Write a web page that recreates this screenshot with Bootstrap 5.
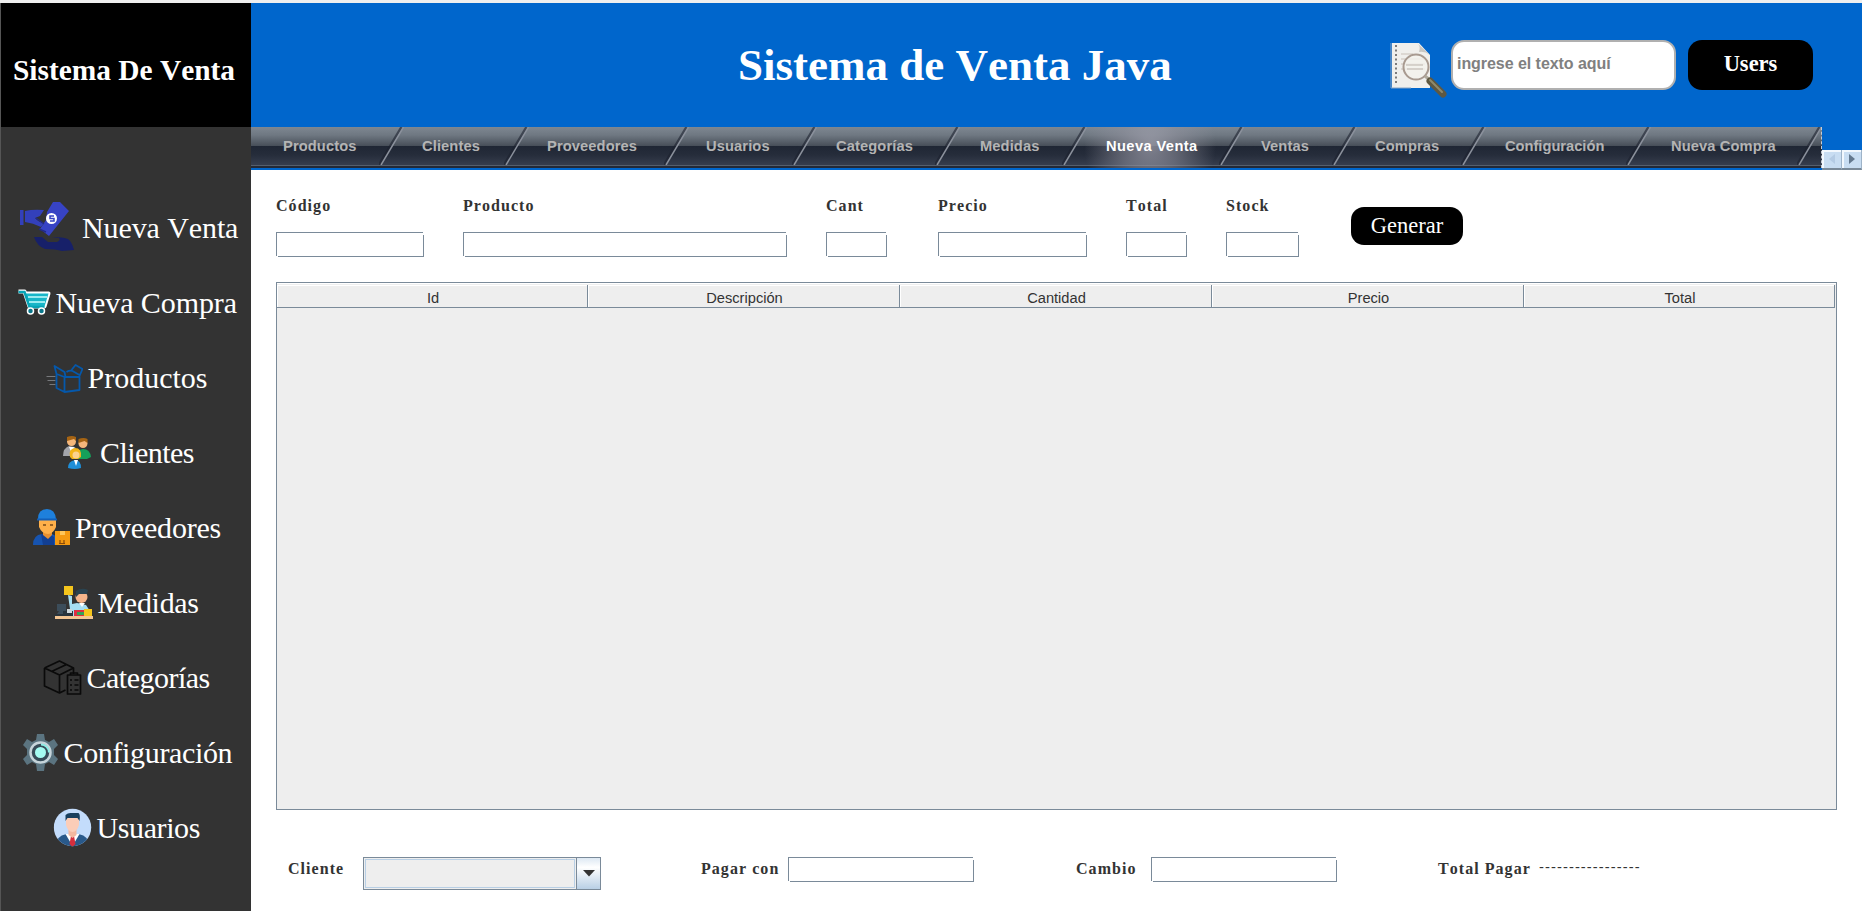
<!DOCTYPE html>
<html lang="es">
<head>
<meta charset="utf-8">
<meta name="viewport" content="width=device-width, initial-scale=1">
<title>Sistema de Venta Java</title>
<link rel="stylesheet" href="https://cdn.jsdelivr.net/npm/bootstrap@5.3.0/dist/css/bootstrap.min.css">
<script src="https://cdn.jsdelivr.net/npm/bootstrap@5.3.0/dist/js/bootstrap.bundle.min.js"></script>
<style>
  :root { --line: #7a8a99; --brand: #0066cc; --ink: #333; }
  body { height: 911px; overflow: hidden; font-family: "Liberation Serif", serif; font-kerning: none; color: var(--ink); background: #fff; border-top: 3px solid #efefef; }
  .side { width: 251px; border-left: 1px solid #555; background: #333; }
  .side-title { height: 124px; padding: 10px 0 0 12px; background: #000; color: #fff; font-size: 29.4px; }
  .side-list { padding-top: 63px; }
  .side-link { height: 75px; font-size: 30px; line-height: 75px; color: #fff; gap: 5px; text-decoration: none; white-space: nowrap; }
  .side-link svg { flex: none; height: 60px; }
  .side-link:nth-child(1) { padding-left: 11px; letter-spacing: -.1px; }
  .side-link:nth-child(2) { padding-left: 12.5px; letter-spacing: -.08px; }
  .side-link:nth-child(3) { padding-left: 43.5px; }
  .side-link:nth-child(4) { padding-left: 52px; letter-spacing: -.55px; }
  .side-link:nth-child(5) { padding-left: 27px; letter-spacing: -.2px; }
  .side-link:nth-child(6) { padding-left: 52.5px; letter-spacing: -.3px; }
  .side-link:nth-child(7) { padding-left: 36.5px; letter-spacing: -.5px; }
  .side-link:nth-child(8) { padding-left: 15.5px; letter-spacing: -.35px; }
  .side-link:nth-child(9) { padding-left: 48.5px; letter-spacing: -.4px; }
  .top { height: 124px; background: var(--brand); }
  .top h1 { font-size: 45px; line-height: 124px; margin: 0 0 0 487px; width: 450px; color: #fff; white-space: nowrap; }
  .top-icon { width: 62px; height: 62px; margin: 36px 0 0 199px; }
  .top-search { width: 225px; height: 50px; margin: 37px 0 0 2px; border: 2px solid #b0b0b0; border-radius: 13px; background: #fff; padding: 0 4px 3px; font: bold 16px "Liberation Sans", sans-serif; letter-spacing: -.05px; color: #808080; }
  .top-search::placeholder { color: #808080; opacity: 1; }
  .pill { background: #000; color: #fff; border: 0; border-radius: 14px; font-size: 22.5px; line-height: 1; padding: 0; white-space: nowrap; }
  .pill-users { width: 125px; height: 50px; margin: 37px 0 0 12px; padding-bottom: 1px; font-weight: bold; }
  .pill-make { width: 112px; height: 38px; margin: 13px 0 0 52px; padding-top: 1px; border-radius: 13px; }
  .tabs { height: 43px; background: var(--brand); }
  .tab-run { height: 41px; width: 1571px; border-right: 1px dashed #c8ccd2; background: linear-gradient(#7e8791 0, #6f7882 8px, #474e58 19px, #1f2634 19px, #262d3b 28px, #363d4d 38px, #565f6c 38px, #565f6c 39px, #242a37 39px); font: bold 14.67px/39px "Liberation Sans", sans-serif; letter-spacing: .12px; color: #b4b4b4; }
  .tab-run a { color: inherit; text-decoration: none; white-space: nowrap; padding-left: 21px; height: 41px; flex: none; }
  .tab-run svg { width: 26px; height: 38px; margin: 0 -3px 0 auto; flex: none; }
  .tab-run a:nth-child(1) { width: 151px; padding-left: 32px; }
  .tab-run a:nth-child(2) { width: 125px; padding-left: 20px; }
  .tab-run a:nth-child(3) { width: 160px; padding-left: 20px; }
  .tab-run a:nth-child(4) { width: 128px; padding-left: 19px; }
  .tab-run a:nth-child(5) { width: 143px; }
  .tab-run a:nth-child(6) { width: 127px; padding-left: 22px; }
  .tab-run a:nth-child(7) { width: 157px; letter-spacing: .4px; color: #fff; background: radial-gradient(ellipse 66px 66px at 65px 18px, rgba(165,165,178,.72), rgba(150,150,162,.5) 45%, transparent); }
  .tab-run a:nth-child(8) { width: 113px; padding-left: 19px; }
  .tab-run a:nth-child(9) { width: 129px; padding-left: 20px; }
  .tab-run a:nth-child(10) { width: 165px; letter-spacing: 0; }
  .tab-run a:nth-child(11) { width: 171px; padding-left: 22px; }
  .roll { width: 20px; height: 20px; background: #c8ddf2; border: 1px solid #9eb3c8; border-width: 0 1px 1px 0; box-shadow: inset 2px 2px #f2f8fe; border-bottom: 2px solid var(--line); }
  .fields { padding: 24px 0 0 25px; height: 112px; }
  .cap { font-size: 16px; font-weight: bold; letter-spacing: 1.05px; line-height: 24px; white-space: nowrap; }
  .boxed { display: block; height: 25px; border: 0; padding: 0 4px; margin-top: 14px; border-radius: 0;
    background:
      linear-gradient(var(--line), var(--line)) 0 0 / calc(100% - 1px) 1px no-repeat,
      linear-gradient(var(--line), var(--line)) 0 0 / 1px calc(100% - 1px) no-repeat,
      linear-gradient(var(--line), var(--line)) 2px 100% / 100% 1px no-repeat,
      linear-gradient(var(--line), var(--line)) 100% 3px / 1px 100% no-repeat, #fff; }
  .w148 { width: 148px; } .w324 { width: 324px; } .w61 { width: 61px; } .w149 { width: 149px; } .w73 { width: 73px; } .w186 { width: 186px; }
  .grid-box { margin-left: 25px; width: 1561px; height: 528px; border: 1px solid var(--line); background: #eee; }
  .grid-head { height: 25px; padding: 1px 1px 0 0; border-top: 1px solid #fff; font: 14.67px/27px "Liberation Sans", sans-serif; }
  .grid-head div { width: 312px; height: 23px; padding-left: 2px; border-right: 1px solid var(--line); border-bottom: 1px solid var(--line); box-shadow: inset 1px 1px #fff; }
  .grid-head div:first-child, .grid-head div:last-child { width: 311px; }
  .pay { padding: 47px 0 0 37px; }
  .pay .boxed { margin-top: 0; }
  .combo { width: 238px; height: 33px; border: 1px solid var(--line); background: #eee; }
  .combo-in { border: 1px solid #b8cfe5; outline: 1px solid #eee; width: 210px; margin: 1px; }
  .combo-btn { width: 24px; border-left: 1px solid var(--line); background: linear-gradient(#dde8f3, #fff 30%, #b8cfe5); }
  .dashes { font: 14.67px/24px "Liberation Sans", sans-serif; letter-spacing: 1.1px; margin-top: -2px; }
  .gap-cliente { width: 75px; } .gap-pagar { margin-left: 100px; width: 87px; } .gap-cambio { margin-left: 102px; width: 75px; } .gap-total { margin-left: 101px; width: 101px; }
  .x39 { margin-left: 39px; } .x51 { margin-left: 51px; }
</style>
</head>
<body>
<svg class="d-none">
  <symbol id="slash" viewBox="0 0 26 38">
    <path d="M22.500 0L0 38" stroke="#1c222e" stroke-opacity=".6" stroke-width="2.500" fill="none"/>
    <path d="M24.500 0L2 38" stroke="#8b919c" stroke-width="1.500" fill="none"/>
  </symbol>
</svg>
<div class="d-flex h-100">
  <aside class="side flex-shrink-0">
    <div class="side-title d-flex align-items-center fw-bold text-nowrap">Sistema De Venta</div>
    <nav class="side-list">
      <a class="side-link d-flex align-items-center" href="#">
        <svg width="65" viewBox="12 198 65 60">
          <path d="M20 210h3.500v15H20zM25 211q8-2 19-1l-4 6-5 2q3 4 9 5l-3 4q-8-4-16-5z" fill="#3340bb"/>
          <path d="M53 202h7l9 9-20 25-9-7 6-9 1-8z" fill="#3743c4"/>
          <path d="M36 218l8 6M39 229l7 3" stroke="#222a86" stroke-width="1.500"/>
          <circle cx="51.500" cy="218.500" r="5.500" fill="#fff"/>
          <path d="M54 216h-4v2.500h4v2.500h-4" stroke="#3743c4" stroke-width="1.500" fill="none"/>
          <path d="M34 237h8l6 5h9q4-2 2-4h-7q9-2 16 1 4 3 6 11l-12 1q-6-2-17-2-8-3-11-12z" fill="#172069"/>
        </svg>Nueva Venta</a>
      <a class="side-link d-flex align-items-center" href="#">
        <svg width="37" viewBox="14 273 37 60">
          <path d="M18.500 291.500h6l5 15h15l4-13H25" fill="#18b6c8" stroke="#fff" stroke-width="4" stroke-linejoin="round"/>
          <path d="M18.500 291.500h6l5 15h15l4-13H25z" fill="#18b6c8"/>
          <path d="M18.500 292h6l5 15h15" fill="none" stroke="#08a4b6" stroke-width="2.500"/>
          <path d="M28 297h19M29 302h16" stroke="#9aebf0" stroke-width="1.800"/>
          <circle cx="30.500" cy="311" r="3" fill="#0a788c" stroke="#fff" stroke-width="1.500"/><circle cx="41.500" cy="311" r="3" fill="#0a788c" stroke="#fff" stroke-width="1.500"/>
        </svg>Nueva Compra</a>
      <a class="side-link d-flex align-items-center" href="#">
        <svg width="38" viewBox="44.500 348 38 60">
          <path d="M46 376.500h9M47 380.500h8M49 384.500h6" stroke="#77797c" stroke-width="1"/>
          <g fill="none" stroke="#0558ab" stroke-width="1.800" stroke-linejoin="round"><path d="M56 374v14l8 4M64 377h15v13l-15 2zM56 374l8 3M56 374l-2-8 10 6 1 5M66 372q3-2 6-1l7 4M71 370l4-5 7 4-3 7"/></g>
        </svg>Productos</a>
      <a class="side-link d-flex align-items-center" href="#">
        <svg width="42" viewBox="53 423 42 60">
          <path d="M63 456q0-8 6-10l6 1 3 9z" fill="#a3a5ab"/><path d="M69 447l3 7 2-7z" fill="#fff"/>
          <circle cx="71.500" cy="441.500" r="4.500" fill="#f5b77b"/><path d="M67 441v-4q5-2 9 0v4l-2-2z" fill="#a66413"/>
          <path d="M77 459q-1-10 6-10 7 0 8 8l-4 2z" fill="#16a05a"/>
          <circle cx="83" cy="443.500" r="4.500" fill="#f5b77b"/><path d="M78.500 443v-4q5-2 9 0v4l-3-2z" fill="#a66413"/>
          <path d="M70 457q-2-8 5-9 7 0 6 9l-3 2h-6z" fill="#f3b51a"/><circle cx="76" cy="455" r="3.500" fill="#fbd28f"/>
          <path d="M68 468q0-7 7-8 6 0 6 8-6 2-13 0z" fill="#1e8ed8"/><path d="M74 460l2 6 2-6z" fill="#fff"/>
        </svg>Clientes</a>
      <a class="side-link d-flex align-items-center" href="#">
        <svg width="42" viewBox="28 498 42 60">
          <path d="M33 545q0-10 9-11h10l4 2v9z" fill="#1754b0"/><path d="M41 534l2 11h11v-8l-5-3z" fill="#123f93"/>
          <path d="M43 529h9v6l-4 4-5-4z" fill="#e78f30"/><path d="M39 519h17v8q-3 7-8 7-6 0-9-7z" fill="#ffb04a"/>
          <path d="M38 519q0-10 9-10 8 0 9 10z" fill="#1e80dc"/><path d="M37 518.500h20v2H37z" fill="#135fb8"/>
          <path d="M43 525h3M50 525h3" stroke="#7a4a18" stroke-width="1.500"/>
          <path d="M55 531h15v14H55z" fill="#f59a12"/><path d="M60 531h5v4h-5z" fill="#ffc65a"/><path d="M60 540v3M64 540v3M59 543.500h6" stroke="#8a4a08" stroke-width="1.200"/>
        </svg>Proveedores</a>
      <a class="side-link d-flex align-items-center" href="#">
        <svg width="39" viewBox="53 573 39 60">
          <path d="M54 616h38v3H54z" fill="#f3c592"/>
          <path d="M67 595l4 1v8l5-1 9 2 4 6v5H70z" fill="#a6def2"/>
          <path d="M63 586h9v9h-9z" fill="#f5c51c"/>
          <circle cx="80.500" cy="597" r="6" fill="#f5b48a"/><path d="M75 597v-6q6-4 12-1l-1 4h-8z" fill="#2a4350"/>
          <path d="M78 603h6l-3 4z" fill="#fff"/>
          <path d="M56 604h9v7h-9zM58 611h6v3h-8z" fill="#3c4d5a"/><path d="M62 611h10v5H54v-2h8z" fill="#29343c"/><path d="M66 609h5v4h-5z" fill="#cfd8dc"/>
          <path d="M73 610h12v6H73z" fill="#dd2f42"/><path d="M76 612h7v3h-7z" fill="#33a15a"/><path d="M83 609h8v7h-8z" fill="#f5c51c"/>
        </svg>Medidas</a>
      <a class="side-link d-flex align-items-center" href="#">
        <svg width="44" viewBox="37.500 648 44 60">
          <g fill="none" stroke="#0a0a0a" stroke-width="1.700" stroke-linejoin="round"><path d="M44 668l15-7 14 7v6M44 668v18l15 7 6-3M44 668l15 7 14-7M59 675v18M51 671.500l15-7"/><path d="M67 675h13v19H67zM70 675v-2h7v2" /><path d="M69.500 680h2M74 680h4M69.500 685h2M74 685h4M69.500 690h2M74 690h4"/></g>
        </svg>Categorías</a>
      <a class="side-link d-flex align-items-center" href="#">
        <svg width="42" viewBox="16 723 42 60">
          <path d="M36 734h7l1 6 4 2 5-3 4 6-4 4v6l4 4-4 6-5-3-4 2-1 7h-7l-1-7-4-2-5 3-4-6 4-4v-6l-4-4 4-6 5 3 4-2z" fill="#5b7480"/>
          <circle cx="39.500" cy="752.500" r="10" fill="#364b58" stroke="#c6d4da" stroke-width="2.500"/>
          <path d="M40 744.500a8 8 0 0 1 8 8" stroke="#8ceee6" stroke-width="2" fill="none"/><circle cx="39.500" cy="752.500" r="5.500" fill="#a4fbf1"/>
        </svg>Configuración</a>
      <a class="side-link d-flex align-items-center" href="#">
        <svg width="42" viewBox="49.500 798 42 60">
          <defs><clipPath id="face"><circle cx="72" cy="827.500" r="18.700"/></clipPath></defs>
          <g clip-path="url(#face)"><path d="M53 808h39v39H53z" fill="#c3dcfb"/>
          <path d="M55 847q0-11 11-13h12q11 2 11 13z" fill="#29598a"/><path d="M65 834l7 12 7-12z" fill="#fff"/><path d="M70.500 836h3l1.500 8-3 3-3-3z" fill="#d62f3e"/>
          <path d="M68 829h8v6l-4 3-4-3z" fill="#f3b8a0"/><path d="M65.500 818h13v7q-2 7-6.500 7t-6.500-7z" fill="#fbcdb8"/>
          <path d="M65 821v-6q2-2 5-2h8q2 1 1 8l-2-3H67z" fill="#183f5e"/></g>
        </svg>Usuarios</a>
    </nav>
  </aside>

  <div class="flex-grow-1">
    <header class="top d-flex align-items-start">
      <h1 class="fw-bold">Sistema de Venta Java</h1>
      <svg class="top-icon" viewBox="1387 39 62 62">
        <path d="M1392 43h27l11 12v33h-38z" fill="#f0efec"/><path d="M1391 43v45h20" fill="none" stroke="#88a4c4" stroke-width="1"/>
        <path d="M1417 43q4 3 2 9 6-1 11 3z" fill="#c8c6c2"/>
        <path d="M1396 45v40" stroke="#555" stroke-width="1.500" stroke-dasharray="2 2.500"/>
        <path d="M1401 54h12M1401 59h24M1401 64h24M1401 69h24" stroke="#c9c0b8" stroke-width="1"/>
        <circle cx="1416" cy="67" r="12.500" fill="#f4f2ee" fill-opacity=".8" stroke="#a89a90" stroke-width="2"/>
        <path d="M1406 65h17M1407 69h16" stroke="#bbb3ac" stroke-width="1"/>
        <path d="M1425 76l6 5" stroke="#b0aa9c" stroke-width="3"/><path d="M1430 81l13 13" stroke="#5e5842" stroke-width="7" stroke-linecap="round"/><path d="M1430 80l12 12" stroke="#8f8a6c" stroke-width="2" stroke-linecap="round"/>
      </svg>
      <input class="top-search" type="text" placeholder="ingrese el texto aquí">
      <button class="pill pill-users" type="button">Users</button>
    </header>

    <div class="tabs d-flex">
      <nav class="tab-run d-flex overflow-hidden">
        <a class="d-flex" href="#">Productos<svg><use href="#slash"/></svg></a>
        <a class="d-flex" href="#">Clientes<svg><use href="#slash"/></svg></a>
        <a class="d-flex" href="#">Proveedores<svg><use href="#slash"/></svg></a>
        <a class="d-flex" href="#">Usuarios<svg><use href="#slash"/></svg></a>
        <a class="d-flex" href="#">Categorías<svg><use href="#slash"/></svg></a>
        <a class="d-flex" href="#">Medidas<svg><use href="#slash"/></svg></a>
        <a class="d-flex" href="#">Nueva Venta<svg><use href="#slash"/></svg></a>
        <a class="d-flex" href="#">Ventas<svg><use href="#slash"/></svg></a>
        <a class="d-flex" href="#">Compras<svg><use href="#slash"/></svg></a>
        <a class="d-flex" href="#">Configuración<svg><use href="#slash"/></svg></a>
        <a class="d-flex" href="#">Nueva Compra<svg><use href="#slash"/></svg></a>
      </nav>
      <div class="d-flex align-self-end">
        <div class="roll d-flex align-items-center justify-content-center"><svg width="6" height="10"><path d="M6 0v10L0 5z" fill="#b4cbe4"/></svg></div>
        <div class="roll d-flex align-items-center justify-content-center"><svg width="6" height="10"><path d="M0 0v10l6-5z" fill="#63788e"/></svg></div>
      </div>
    </div>

    <form class="fields d-flex">
      <label class="cap">Código<input class="boxed w148"></label>
      <label class="cap x39">Producto<input class="boxed w324"></label>
      <label class="cap x39">Cant<input class="boxed w61"></label>
      <label class="cap x51">Precio<input class="boxed w149"></label>
      <label class="cap x39">Total<input class="boxed w61"></label>
      <label class="cap x39">Stock<input class="boxed w73"></label>
      <button class="pill pill-make" type="button">Generar</button>
    </form>

    <div class="grid-box">
      <div class="grid-head d-flex text-center"><div>Id</div><div>Descripción</div><div>Cantidad</div><div>Precio</div><div>Total</div></div>
    </div>

    <div class="pay d-flex align-items-start">
      <span class="cap gap-cliente">Cliente</span>
      <div class="combo d-flex"><div class="combo-in"></div><div class="combo-btn d-flex align-items-center justify-content-center"><svg width="12" height="7"><path d="M0 0h12L6 6.500z" fill="#333"/></svg></div></div>
      <span class="cap gap-pagar">Pagar con</span><input class="boxed w186">
      <span class="cap gap-cambio">Cambio</span><input class="boxed w186">
      <span class="cap gap-total">Total Pagar</span><span class="dashes">-----------------</span>
    </div>
  </div>
</div>
</body>
</html>
